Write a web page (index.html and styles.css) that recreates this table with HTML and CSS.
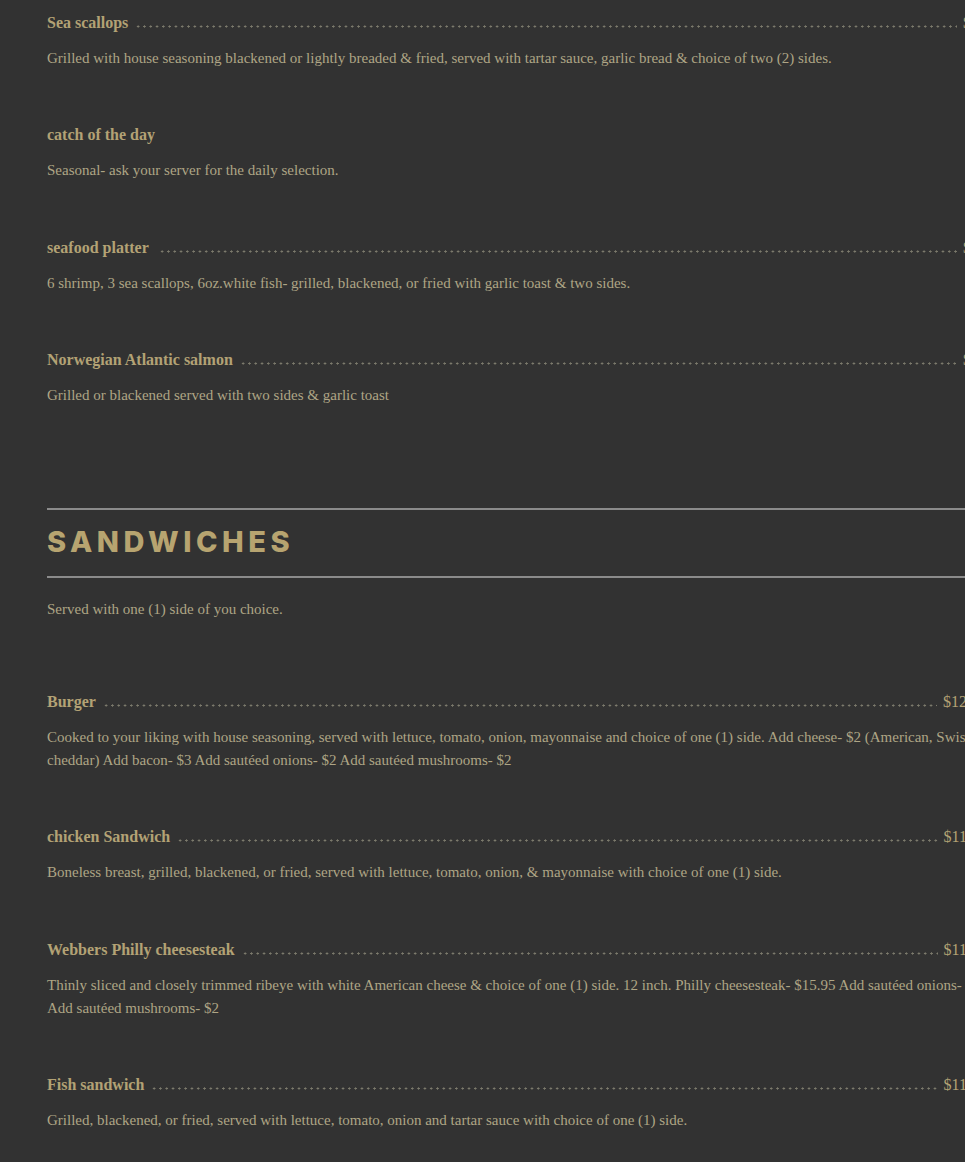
FILE: index.html
```html
<!DOCTYPE html>
<html>
<head>
<meta charset="utf-8">
<link rel="stylesheet" href="styles.css">
</head>
<body>
<div class="menu">
  <section class="section section-seafood">
    <div class="item">
      <div class="item-head"><span class="name">Sea scallops</span><span class="leader"></span><span class="price">$21.95</span></div>
      <p class="desc">Grilled with house seasoning blackened or lightly breaded &amp; fried, served with tartar sauce, garlic bread &amp; choice of two (2) sides.</p>
    </div>
    <div class="item">
      <div class="item-head"><span class="name">catch of the day</span></div>
      <p class="desc">Seasonal- ask your server for the daily selection.</p>
    </div>
    <div class="item">
      <div class="item-head"><span class="name">seafood platter</span><span class="leader wide"></span><span class="price">$24.95</span></div>
      <p class="desc">6 shrimp, 3 sea scallops, 6oz.white fish- grilled, blackened, or fried with garlic toast &amp; two sides.</p>
    </div>
    <div class="item">
      <div class="item-head"><span class="name">Norwegian Atlantic salmon</span><span class="leader"></span><span class="price">$19.95</span></div>
      <p class="desc">Grilled or blackened served with two sides &amp; garlic toast</p>
    </div>
  </section>

  <section class="section section-sandwiches">
    <header class="section-title">
      <h2>SANDWICHES</h2>
    </header>
    <p class="desc intro">Served with one (1) side of you choice.</p>
    <div class="item">
      <div class="item-head"><span class="name">Burger</span><span class="leader"></span><span class="price">$12.95</span></div>
      <p class="desc">Cooked to your liking with house seasoning, served with lettuce, tomato, onion, mayonnaise and choice of one (1) side. Add cheese- $2 (American, Swiss, cheddar) Add bacon- $3 Add sautéed onions- $2 Add sautéed mushrooms- $2</p>
    </div>
    <div class="item">
      <div class="item-head"><span class="name">chicken Sandwich</span><span class="leader"></span><span class="price">$11.95</span></div>
      <p class="desc">Boneless breast, grilled, blackened, or fried, served with lettuce, tomato, onion, &amp; mayonnaise with choice of one (1) side.</p>
    </div>
    <div class="item">
      <div class="item-head"><span class="name">Webbers Philly cheesesteak</span><span class="leader"></span><span class="price">$11.95</span></div>
      <p class="desc">Thinly sliced and closely trimmed ribeye with white American cheese &amp; choice of one (1) side. 12 inch. Philly cheesesteak- $15.95 Add sautéed onions- $2 Add sautéed mushrooms- $2</p>
    </div>
    <div class="item">
      <div class="item-head"><span class="name">Fish sandwich</span><span class="leader"></span><span class="price">$11.95</span></div>
      <p class="desc">Grilled, blackened, or fried, served with lettuce, tomato, onion and tartar sauce with choice of one (1) side.</p>
    </div>
  </section>
</div>
</body>
</html>
```

FILE: styles.css
```css
html, body {
  margin: 0;
  padding: 0;
  background: #323232;
  overflow: hidden;
}

body {
  font-family: "Liberation Serif", "Times New Roman", serif;
  color: #aea585;
}

.menu {
  width: 960px;
  padding: 12.6px 0 0 47px;
}

.section-seafood .item-head {
  width: 960px;
}

.section-sandwiches .item-head {
  width: 940px;
}

.item {
  margin-bottom: 55.5px;
}

.item-head {
  display: flex;
  align-items: baseline;
  height: 20px;
  line-height: 20px;
  margin-bottom: 14px;
}

.name {
  font-size: 16px;
  font-weight: bold;
  color: #b3a275;
  white-space: nowrap;
}

.leader {
  flex: 1;
  height: 3px;
  margin: 0 6px 0 7px;
  background-image: radial-gradient(circle, #7c7a6c 0.9px, transparent 1.3px);
  background-size: 6.3px 3px;
  background-repeat: repeat-x;
  background-position: 0 0;
}

.leader.wide {
  margin-left: 10px;
}

.price {
  font-size: 16px;
  color: #b3a275;
  white-space: nowrap;
}

.desc {
  margin: 0;
  font-size: 15px;
  line-height: 23px;
  color: #aea585;
}

.section-seafood {
  margin-bottom: 100.5px;
}

.section-title {
  width: 960px;
  border-top: 2px solid #8b8b8b;
  border-bottom: 2px solid #8b8b8b;
  padding: 16.5px 0 17.5px;
}

.section-title h2 {
  margin: 0;
  font-family: Inter, "Liberation Sans", sans-serif;
  font-weight: 800;
  font-size: 29px;
  line-height: 32px;
  letter-spacing: 4.5px;
  color: #b7a470;
}

.intro {
  margin-top: 20.5px;
  margin-bottom: 70.5px;
}
```
